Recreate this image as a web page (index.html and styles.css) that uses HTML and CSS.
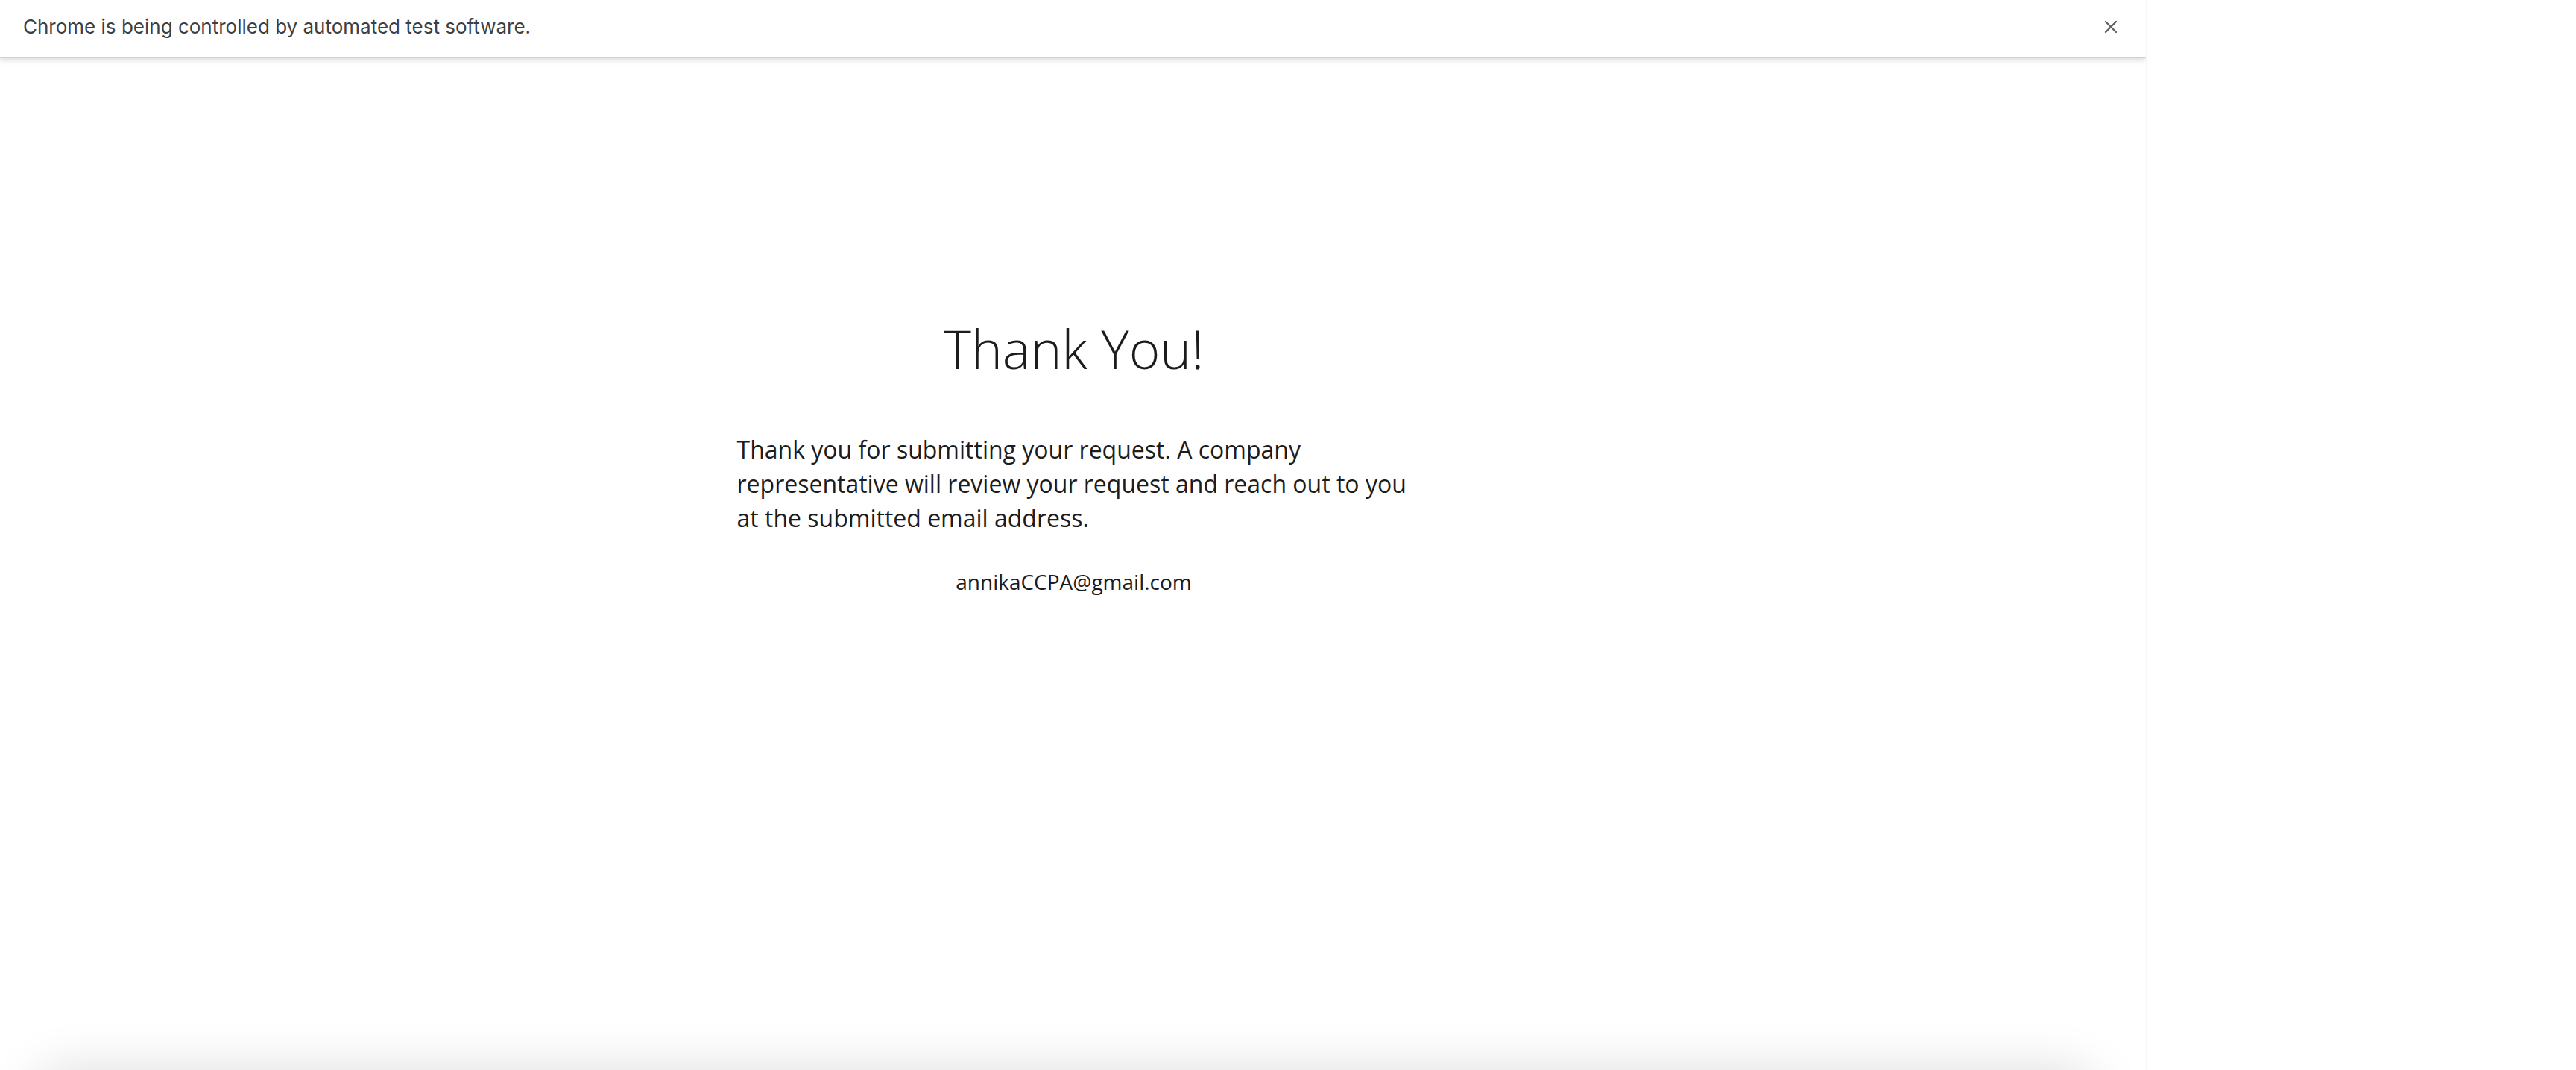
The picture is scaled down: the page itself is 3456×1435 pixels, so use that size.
FILE: index.html
```html
<!DOCTYPE html>
<html lang="en">
<head>
<meta charset="utf-8">
<title>Thank You</title>
<link rel="stylesheet" href="styles.css">
</head>
<body>
<div class="window">
  <div class="infobar">
    <span class="infobar-text">Chrome is being controlled by automated test software.</span>
    <svg class="close" width="18" height="18" viewBox="0 0 18 18" aria-hidden="true">
      <path d="M2 2 L16 16 M16 2 L2 16" stroke="#5f6368" stroke-width="2.4" stroke-linecap="round" fill="none"/>
    </svg>
  </div>
  <main class="content">
    <h1 class="title">Thank You!</h1>
    <p class="message">Thank you for submitting your request. A company representative will review your request and reach out to you at the submitted email address.</p>
    <p class="email">annikaCCPA@gmail.com</p>
  </main>
  <div class="shade"><div class="footer-shadow"></div></div>
</div>
</body>
</html>
```
FILE: styles.css
```css
html, body {
  margin: 0;
  padding: 0;
  background: #ffffff;
}
body {
  font-family: "Open Sans", "Liberation Sans", sans-serif;
  color: #1c1c1c;
  overflow: hidden;
}
.window {
  width: 2880px;
  height: 100vh;
  position: relative;
  overflow: hidden;
  border-right: 1px solid #f6f6f6;
  box-sizing: border-box;
}
.infobar {
  height: 78px;
  box-sizing: border-box;
  display: flex;
  align-items: center;
  justify-content: space-between;
  padding: 0 38px 6px 31px;
  background: #ffffff;
  border-bottom: 1px solid #d2d2d2;
  box-shadow: 0 2px 8px rgba(0, 0, 0, 0.16);
  position: relative;
  z-index: 1;
}
.infobar-text {
  font-family: "Inter", "Liberation Sans", sans-serif;
  font-size: 26px;
  color: #3c4043;
}
.close {
  display: block;
}
.content {
  width: 904px;
  margin: 0 auto;
  padding-top: 339px;
  padding-left: 2px;
}
.title {
  margin: 0;
  font-size: 71px;
  font-weight: 300;
  line-height: 101px;
  text-align: center;
  color: #1c1c1c;
}
.message {
  margin: 62px 0 0;
  font-size: 32px;
  line-height: 46px;
}
.email {
  margin: 43px 0 0;
  font-size: 28px;
  line-height: 38px;
  text-align: center;
}
.shade {
  position: absolute;
  left: 0;
  right: 0;
  bottom: 0;
  height: 100px;
  overflow: hidden;
  pointer-events: none;
}
.footer-shadow {
  position: absolute;
  left: 40px;
  right: 60px;
  top: 100px;
  height: 120px;
  border-radius: 60px;
  background: #ffffff;
  box-shadow: 0 0 70px rgba(0, 0, 0, 0.14);
}
```
